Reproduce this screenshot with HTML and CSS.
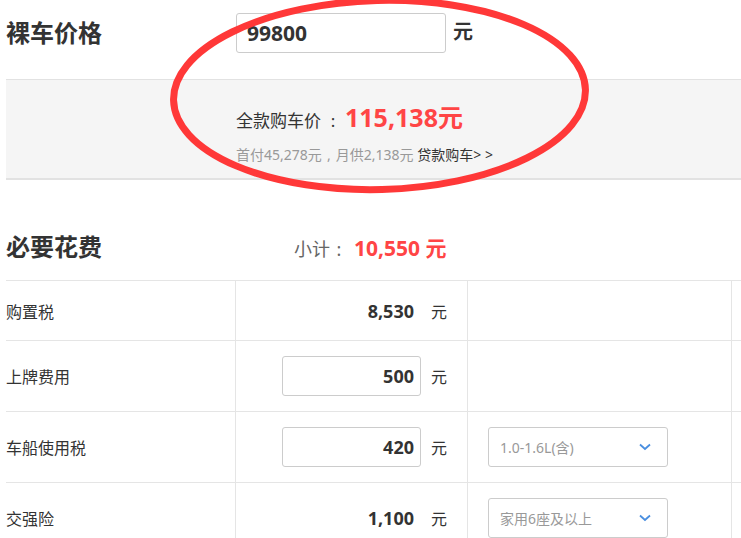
FILE: index.html
```html
<!DOCTYPE html>
<html lang="zh">
<head>
<meta charset="utf-8">
<title>购车计算器</title>
<link rel="stylesheet" href="styles.css">
</head>
<body>
<div class="page">
  <div class="head">
    <div class="title">裸车价格</div>
    <div class="price-box">99800</div>
    <div class="unit-big">元</div>
  </div>
  <div class="band">
    <div class="total-line">全款购车价<span class="colon-total">:</span><span class="total">115,138元</span></div>
    <div class="sub-line">首付45,278元<span class="comma">,</span>月供2,138元 <a class="loan">贷款购车&gt; &gt;</a></div>
  </div>
  <div class="sec-head">
    <div class="title">必要花费</div>
    <div class="subtotal">小计<span class="colon-sub">:</span><span class="subtotal-num">10,550 元</span></div>
  </div>
  <div class="table">
    <div class="row row-first">
      <div class="cell c1">购置税</div>
      <div class="cell c2"><span class="val">8,530</span><span class="yuan">元</span></div>
      <div class="cell c3"></div>
      <div class="cell c4"></div>
    </div>
    <div class="row">
      <div class="cell c1">上牌费用</div>
      <div class="cell c2"><span class="val boxed">500</span><span class="yuan">元</span></div>
      <div class="cell c3"></div>
      <div class="cell c4"></div>
    </div>
    <div class="row">
      <div class="cell c1">车船使用税</div>
      <div class="cell c2"><span class="val boxed">420</span><span class="yuan">元</span></div>
      <div class="cell c3"><div class="select"><span>1.0-1.6L(含)</span><svg class="chev" width="12" height="8" viewBox="0 0 12 8"><path d="M1 1.5 L6 6 L11 1.5" fill="none" stroke="#4a8fe0" stroke-width="1.8"/></svg></div></div>
      <div class="cell c4"></div>
    </div>
    <div class="row">
      <div class="cell c1">交强险</div>
      <div class="cell c2"><span class="val">1,100</span><span class="yuan">元</span></div>
      <div class="cell c3"><div class="select"><span>家用6座及以上</span><svg class="chev" width="12" height="8" viewBox="0 0 12 8"><path d="M1 1.5 L6 6 L11 1.5" fill="none" stroke="#4a8fe0" stroke-width="1.8"/></svg></div></div>
      <div class="cell c4"></div>
    </div>
  </div>
  <svg class="circle" width="741" height="538" viewBox="0 0 741 538">
    <ellipse cx="379.5" cy="95" rx="206" ry="94.5" transform="rotate(-1.5 379.5 95)" fill="none" stroke="#ff3838" stroke-width="7"/>
  </svg>
</div>
</body>
</html>
```
FILE: styles.css
```css
* { box-sizing: border-box; }
html, body { margin: 0; padding: 0; background: #fff; }
body {
  font-family: "Noto Sans", "Noto Sans CJK SC", sans-serif;
  color: #333;
}
.page {
  position: relative;
  width: 741px;
  height: 538px;
  overflow: hidden;
  padding-left: 6px;
}
.head {
  display: flex;
  align-items: flex-start;
  padding-top: 13px;
  height: 79px;
}
.title {
  flex: 0 0 230px;
  font-size: 24px;
  font-weight: 700;
  line-height: 40px;
  color: #333;
}
.price-box {
  flex: 0 0 210px;
  height: 40px;
  border: 1px solid #ccc;
  border-radius: 3px;
  padding-left: 10px;
  font-size: 21px;
  font-weight: 700;
  line-height: 38px;
  color: #333;
}
.unit-big {
  margin-left: 7px;
  font-size: 20px;
  font-weight: 700;
  line-height: 38px;
}
.band {
  background: #f5f5f5;
  border-top: 1px solid #e2e2e2;
  border-bottom: 2px solid #e2e2e2;
  height: 101px;
  padding: 22px 0 17px 230px;
}
.total-line {
  font-size: 17px;
  line-height: 30px;
  white-space: nowrap;
}
.colon-total {
  display: inline-block;
  width: 24px;
  text-align: center;
}
.total {
  font-size: 25px;
  font-weight: 700;
  color: #ff4545;
}
.sub-line {
  margin-top: 9px;
  font-size: 14px;
  line-height: 20px;
  color: #999;
  white-space: nowrap;
}
.comma {
  display: inline-block;
  width: 14px;
  text-align: center;
}
.loan { color: #333; }
.sec-head {
  display: flex;
  align-items: center;
  margin-top: 47px;
  height: 40px;
  margin-bottom: 13px;
}
.subtotal {
  padding-left: 58px;
  font-size: 18px;
  color: #666;
  white-space: nowrap;
}
.colon-sub {
  display: inline-block;
  width: 18px;
  margin-right: 6px;
  text-align: center;
}
.subtotal-num {
  font-size: 21px;
  font-weight: 700;
  color: #ff4545;
}
.table { border-top: 1px solid #e5e5e5; }
.row {
  display: flex;
  height: 71px;
  border-bottom: 1px solid #e5e5e5;
}
.row-first { height: 60px; }
.cell {
  display: flex;
  align-items: center;
  flex-shrink: 0;
  border-right: 1px solid #e5e5e5;
}
.c1 { width: 230px; font-size: 16px; color: #333; }
.c2 { width: 232px; justify-content: flex-end; padding-right: 20px; }
.c3 { width: 264px; padding-left: 20px; }
.c4 { width: 40px; border-right: none; }
.val {
  width: 139px;
  height: 40px;
  line-height: 38px;
  text-align: right;
  padding-right: 6px;
  font-size: 18px;
  font-weight: 700;
  color: #333;
  border: 1px solid transparent;
}
.val.boxed {
  border-color: #ccc;
  border-radius: 3px;
}
.yuan {
  margin-left: 10px;
  font-size: 16px;
  color: #333;
}
.select {
  width: 180px;
  height: 40px;
  border: 1px solid #ccc;
  border-radius: 3px;
  display: flex;
  align-items: center;
  justify-content: space-between;
  padding: 0 16px 0 11px;
  font-size: 14px;
  color: #999;
}
.chev { display: block; }
.circle {
  position: absolute;
  left: 0;
  top: 0;
  pointer-events: none;
}
```
